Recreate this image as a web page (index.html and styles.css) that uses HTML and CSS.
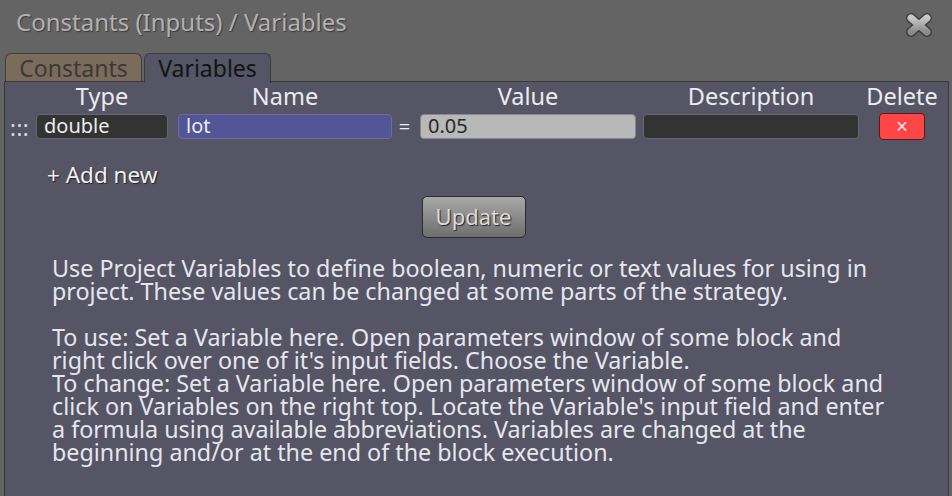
FILE: index.html
```html
<!DOCTYPE html>
<html>
<head>
<meta charset="utf-8">
<link rel="stylesheet" href="styles.css">
</head>
<body>
<div class="window">
  <div class="titlebar">
    <div class="title">Constants (Inputs) / Variables</div>
    <svg class="close" width="30" height="28" viewBox="0 0 30 28">
      <defs>
        <linearGradient id="cg" x1="0" y1="0" x2="0" y2="1">
          <stop offset="0" stop-color="#c8c8c8"/>
          <stop offset="1" stop-color="#8a8a8a"/>
        </linearGradient>
      </defs>
      <path d="M7 7 L23 21 M23 7 L7 21" stroke="#3c3c3c" stroke-width="10" stroke-linecap="round"/>
      <path d="M7 7 L23 21 M23 7 L7 21" stroke="url(#cg)" stroke-width="7" stroke-linecap="round"/>
    </svg>
  </div>
  <div class="tabs">
    <div class="tab tab-constants">Constants</div>
    <div class="tab tab-variables">Variables</div>
  </div>
  <div class="panel">
    <div class="grid">
      <div></div>
      <div class="hdr w-type">Type</div>
      <div class="hdr w-name">Name</div>
      <div></div>
      <div class="hdr w-value">Value</div>
      <div class="hdr w-desc">Description</div>
      <div class="hdr">Delete</div>

      <div class="drag">:::</div>
      <div class="field f-type w-type">double</div>
      <div class="field f-name w-name">lot</div>
      <div class="eq">=</div>
      <div class="field f-value w-value">0.05</div>
      <div class="field f-desc w-desc"></div>
      <div class="delcell"><div class="del">×</div></div>
    </div>
    <div class="addnew">+ Add new</div>
    <div class="btnrow"><div class="update">Update</div></div>
    <div class="help">
      Use Project Variables to define boolean, numeric or text values for using in project. These values can be changed at some parts of the strategy.<br><br>
      To use: Set a Variable here. Open parameters window of some block and right click over one of it's input fields. Choose the Variable.<br>
      To change: Set a Variable here. Open parameters window of some block and click on Variables on the right top. Locate the Variable's input field and enter a formula using available abbreviations. Variables are changed at the beginning and/or at the end of the block execution.
    </div>
  </div>
</div>
</body>
</html>
```
FILE: styles.css
```css
html, body {
  margin: 0;
  padding: 0;
  background: #646464;
  overflow: hidden;
}
body {
  width: 952px;
  height: 496px;
  font-family: "Noto Sans", "Open Sans", sans-serif;
}
.window {
  display: flex;
  flex-direction: column;
  height: 496px;
}
.titlebar {
  height: 53px;
  display: flex;
  align-items: flex-start;
  justify-content: space-between;
  padding: 0 18px 0 16px;
  box-sizing: border-box;
}
.title {
  font-size: 24px;
  line-height: 28px;
  margin-top: 8px;
  color: #b2b2b2;
  text-shadow: 1px 1px 1px #3a3a3a;
}
.close {
  margin-top: 11px;
}
.tabs {
  display: flex;
  padding-left: 5px;
  gap: 2px;
  height: 28px;
}
.tab {
  font-size: 23px;
  line-height: 28px;
  text-align: center;
  border: 1px solid #3c3c3c;
  border-bottom: none;
  border-radius: 6px 6px 0 0;
  box-sizing: border-box;
  height: 29px;
}
.tab-constants {
  background: #7a6b5a;
  color: #3a3a3a;
  width: 137px;
}
.tab-variables {
  background: #555565;
  color: #141414;
  width: 127px;
  height: 30px;
  position: relative;
  z-index: 1;
}
.panel {
  flex: 1;
  margin: 0 3px 0 4px;
  background: #555565;
  border: 1px solid #3a3a3a;
  border-bottom: none;
  color: #ebebf2;
}
.grid {
  display: grid;
  grid-template-columns: 31px 142px 214px 28px 223px 216px 86px;
  row-gap: 2px;
  align-items: center;
}
.w-type { width: 132px; }
.w-name { width: 214px; }
.w-value { width: 216px; }
.w-desc { width: 216px; }
.hdr {
  font-size: 23.5px;
  line-height: 29px;
  text-align: center;
  height: 29px;
}
.drag {
  font-size: 22px;
  line-height: 24px;
  padding-left: 5px;
  color: #d8d8e0;
  letter-spacing: 0.5px;
}
.field {
  height: 25px;
  box-sizing: border-box;
  border: 1px solid #66666e;
  border-radius: 4px;
  font-size: 20px;
  line-height: 22px;
  padding-left: 7px;
}
.f-type { background: #333333; color: #ececec; }
.f-name { background: #535596; color: #ececf4; border-color: #6a6ca0; }
.eq {
  font-size: 20px;
  text-align: center;
  padding-right: 3px;
}
.f-value { background: #b8b8b8; color: #2a2a2a; border-color: #8a8a8a; }
.f-desc { background: #333333; }
.delcell {
  display: flex;
  justify-content: center;
}
.del {
  width: 46px;
  height: 27px;
  box-sizing: border-box;
  background: #ff4545;
  border: 1px solid #5a1a1a;
  border-radius: 4px;
  color: #f4e4e4;
  font-size: 21px;
  line-height: 24px;
  text-align: center;
}
.addnew {
  font-size: 22.5px;
  line-height: 28px;
  margin: 21px 0 0 42px;
  color: #f0f0f4;
  text-shadow: 1px 1px 1px #222;
}
.btnrow {
  display: flex;
  justify-content: center;
  margin-top: 7px;
}
.update {
  width: 104px;
  height: 42px;
  box-sizing: border-box;
  margin-left: -6px;
  border: 1px solid #2c2c2c;
  border-radius: 5px;
  background: linear-gradient(#a8a8a8, #6e6e6e);
  color: #dcdcdc;
  font-size: 22px;
  line-height: 38px;
  text-align: center;
  text-shadow: 1px 1px 1px #222;
}
.help {
  margin: 19px 0 0 47px;
  width: 842px;
  font-size: 23.3px;
  line-height: 23px;
  color: #e6e6ee;
}
```
